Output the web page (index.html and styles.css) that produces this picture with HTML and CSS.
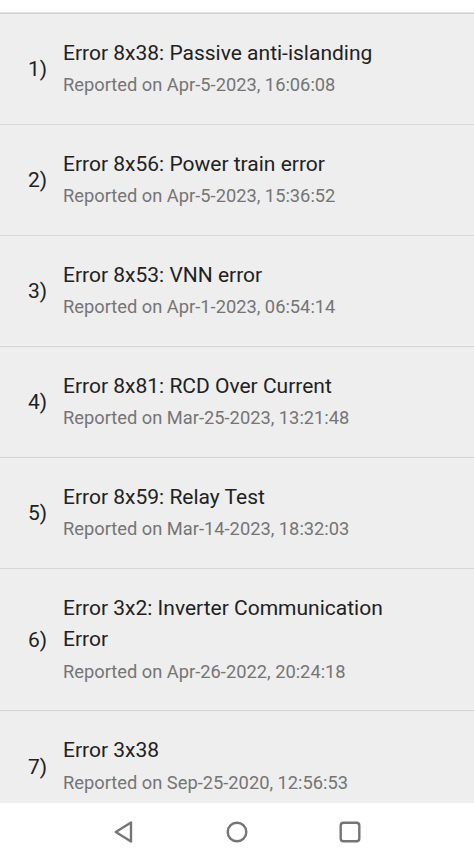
FILE: index.html
```html
<!DOCTYPE html>
<html lang="en">
<head>
    <title>Error History</title>
    <link rel="stylesheet" href="styles.css">
</head>
<body>
    <div class="screen">
        <ul class="error-list">
            <li class="error-item">
                <span class="error-index">1)</span>
                <div class="error-body">
                    <div class="error-title">Error 8x38: Passive anti-islanding</div>
                    <div class="error-date">Reported on Apr-5-2023, 16:06:08</div>
                </div>
            </li>
            <li class="error-item">
                <span class="error-index">2)</span>
                <div class="error-body">
                    <div class="error-title">Error 8x56: Power train error</div>
                    <div class="error-date">Reported on Apr-5-2023, 15:36:52</div>
                </div>
            </li>
            <li class="error-item">
                <span class="error-index">3)</span>
                <div class="error-body">
                    <div class="error-title">Error 8x53: VNN error</div>
                    <div class="error-date">Reported on Apr-1-2023, 06:54:14</div>
                </div>
            </li>
            <li class="error-item">
                <span class="error-index">4)</span>
                <div class="error-body">
                    <div class="error-title">Error 8x81: RCD Over Current</div>
                    <div class="error-date">Reported on Mar-25-2023, 13:21:48</div>
                </div>
            </li>
            <li class="error-item">
                <span class="error-index">5)</span>
                <div class="error-body">
                    <div class="error-title">Error 8x59: Relay Test</div>
                    <div class="error-date">Reported on Mar-14-2023, 18:32:03</div>
                </div>
            </li>
            <li class="error-item">
                <span class="error-index">6)</span>
                <div class="error-body">
                    <div class="error-title">Error 3x2: Inverter Communication Error</div>
                    <div class="error-date">Reported on Apr-26-2022, 20:24:18</div>
                </div>
            </li>
            <li class="error-item">
                <span class="error-index">7)</span>
                <div class="error-body">
                    <div class="error-title">Error 3x38</div>
                    <div class="error-date">Reported on Sep-25-2020, 12:56:53</div>
                </div>
            </li>
        </ul>

        <nav class="nav-bar">
            <svg class="nav-icon" viewBox="0 0 24 24" width="24" height="24">
                <path d="M19 2.5 L19 21.5 L3.8 12 Z" fill="none" stroke="#757575" stroke-width="2.4" stroke-linejoin="round"/>
            </svg>
            <svg class="nav-icon" viewBox="0 0 24 24" width="24" height="24">
                <circle cx="12" cy="12" r="9.3" fill="none" stroke="#757575" stroke-width="2.4"/>
            </svg>
            <svg class="nav-icon" viewBox="0 0 24 24" width="24" height="24">
                <rect x="2.7" y="2.7" width="18.6" height="18.6" rx="2.8" fill="none" stroke="#757575" stroke-width="2.4"/>
            </svg>
        </nav>
    </div>
</body>
</html>
```

FILE: styles.css
```css
body {
    margin: 0;
    padding: 0;
    font-family: Roboto, "Noto Sans", Arial, sans-serif;
    background-color: #ffffff;
    color: #212121;
}

.screen {
    display: flex;
    flex-direction: column;
    height: 100vh;
    padding-top: 13px;
    box-sizing: border-box;
}

.error-list {
    flex: 1;
    margin: 0;
    padding: 0;
    list-style: none;
    overflow: hidden;
    background-color: #eeeeee;
    border-top: 1px solid #d2d2d2;
    box-shadow: 0 -1px 0 #e4e4e4;
}

.error-item {
    display: flex;
    align-items: center;
    padding: 23.6px 50px 22.9px 28px;
    border-bottom: 1px solid #d6d6d6;
}

.error-index {
    width: 35px;
    flex-shrink: 0;
    font-size: 21px;
    color: #212121;
}

.error-body {
    flex: 1;
}

.error-title {
    font-size: 21px;
    line-height: 31.5px;
    color: #212121;
}

.error-date {
    font-size: 18.3px;
    line-height: 32px;
    color: #757575;
}

.nav-bar {
    height: 58px;
    flex-shrink: 0;
    display: flex;
    justify-content: center;
    align-items: center;
    gap: 89px;
    background-color: #ffffff;
}

.nav-icon {
    display: block;
}
```
